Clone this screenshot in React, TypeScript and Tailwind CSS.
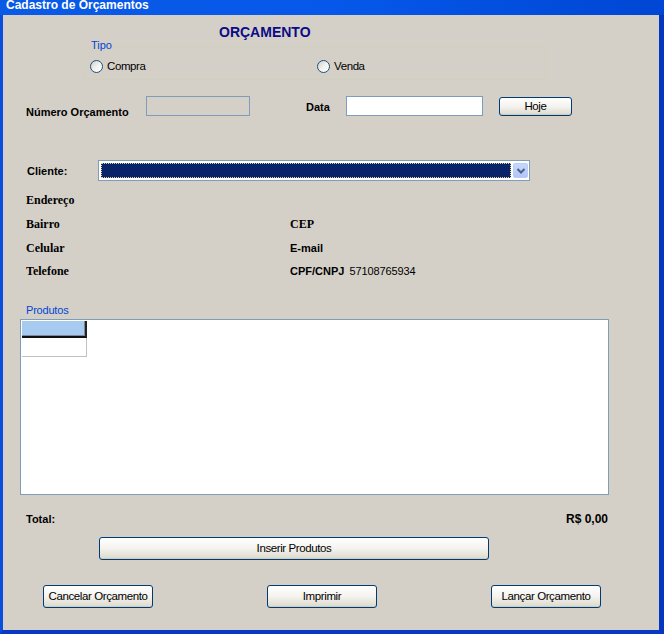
import React from 'react';

const XpButton: React.FC<{ label: string; className?: string }> = ({ label, className = '' }) => (
  <button
    className={`flex items-center justify-center rounded-[3px] border border-[#003c74] bg-linear-to-b from-white via-[#f4f3ee] to-[#dcd8cc] text-[11.5px] tracking-[-0.4px] text-black shadow-[inset_0_-1px_0_#d0cbbd] ${className}`}
  >
    {label}
  </button>
);

const Radio: React.FC<{ label: string; className?: string }> = ({ label, className = '' }) => (
  <label className={`flex items-center gap-[4px] text-[11.5px] tracking-[-0.4px] text-black ${className}`}>
    <span className="h-[13px] w-[13px] shrink-0 rounded-full border border-[#1c5180] bg-linear-to-br from-[#d2cec3] via-[#f2f1ec] to-white" />
    <span>{label}</span>
  </label>
);

const serifLabel = "font-['Liberation_Serif',serif] text-[12px] font-bold leading-[14px] text-black";
const sansLabel = 'text-[11px] font-bold leading-[13px] text-black';

export default function App() {
  return (
    <div className="flex h-[634px] w-[664px] flex-col overflow-hidden font-['Liberation_Sans',Arial,sans-serif]">
      {/* Title bar (cut off at top) */}
      <div className="h-[15px] shrink-0 overflow-hidden bg-linear-to-r from-[#0a5ae6] via-[#0758ea] to-[#0046d4] pl-[6px]">
        <div className="-mt-[1px] text-[12px] font-bold leading-[12px] text-white">Cadastro de Orçamentos</div>
      </div>

      {/* Client area */}
      <div className="flex flex-1 flex-col border-b-[4px] border-l-[3px] border-r-[5px] border-b-[#0838c4] border-l-[#0a4edc] border-r-[#0436c0] bg-[#d4d0c8]">
        <div className="mt-[9px] h-[16px] pl-[216px] text-[14px] font-bold leading-[16px] text-[#0b0b86]">ORÇAMENTO</div>

        {/* Tipo group */}
        <div className="relative ml-[80px] mt-[6px] h-[34px] w-[463px] rounded-[3px] border border-[#d0d0bf]">
          <span className="absolute left-[6px] top-[-8px] bg-[#d4d0c8] px-[1px] text-[11px] leading-[13px] text-[#0046d5]">Tipo</span>
          <div className="mt-[13px] flex h-[13px] items-center pl-[6px]">
            <Radio label="Compra" className="w-[227px]" />
            <Radio label="Venda" />
          </div>
        </div>

        {/* Número / Data */}
        <div className="mt-[16px] flex h-[21px] items-start">
          <div className={`ml-[23px] mt-[10px] w-[120px] ${sansLabel}`}>Número Orçamento</div>
          <div className="h-[20px] w-[104px] border border-[#7f9db9] bg-[#d4d0c8]" />
          <div className={`ml-[56px] mt-[5px] w-[40px] ${sansLabel}`}>Data</div>
          <div className="h-[20px] w-[137px] border border-[#7f9db9] bg-white" />
          <XpButton label="Hoje" className="ml-[16px] mt-[1px] h-[19px] w-[73px]" />
        </div>

        {/* Cliente */}
        <div className="mt-[43px] flex h-[21px] items-start">
          <div className={`ml-[24px] mt-[5px] w-[71px] ${sansLabel}`}>Cliente:</div>
          <div className="flex h-[21px] w-[432px] items-center gap-[2px] border border-[#7f9db9] bg-white p-[1px] pl-[2px]">
            <div className="h-[15px] w-[410px] border border-dotted border-[#e8d88a] bg-[#0a246a]" />
            <div className="flex h-[15px] w-[15px] items-center justify-center rounded-[2px] border border-[#b9cdf8] bg-linear-to-b from-[#c8d8fc] to-[#b0c6f6]">
              <svg width="8" height="6" viewBox="0 0 8 6">
                <path d="M0.5 1 L4 4.5 L7.5 1" fill="none" stroke="#4d6185" strokeWidth="2" />
              </svg>
            </div>
          </div>
        </div>

        {/* Client details */}
        <div className={`ml-[23px] mt-[12px] h-[14px] ${serifLabel}`}>Endereço</div>
        <div className="ml-[23px] mt-[10px] flex h-[14px]">
          <div className={`w-[264px] ${serifLabel}`}>Bairro</div>
          <div className={serifLabel}>CEP</div>
        </div>
        <div className="ml-[23px] mt-[10px] flex h-[14px]">
          <div className={`w-[264px] ${serifLabel}`}>Celular</div>
          <div className={`mt-[1px] ${sansLabel}`}>E-mail</div>
        </div>
        <div className="ml-[23px] mt-[9px] flex h-[14px]">
          <div className={`w-[264px] ${serifLabel}`}>Telefone</div>
          <div className={`mt-[1px] text-[11.5px] ${sansLabel}`}>CPF/CNPJ</div>
          <div className="ml-[5px] mt-[1px] text-[11px] leading-[13px] tracking-[-0.1px] text-black">57108765934</div>
        </div>

        {/* Produtos */}
        <div className="ml-[23px] mt-[26px] h-[13px] text-[11px] leading-[13px] tracking-[-0.2px] text-[#0046d5]">Produtos</div>
        <div className="ml-[17px] mt-[2px] h-[176px] w-[589px] border border-[#7f9db9] bg-white p-[1px]">
          <div className="h-[17px] w-[65px] border-b-2 border-r-2 border-b-[#111] border-r-[#222] bg-[#a6caf0] shadow-[inset_-1px_-1px_0_#7a8a9c]" />
          <div className="h-[19px] w-[65px] border-b border-r border-[#c0c0c0] bg-white" />
        </div>

        {/* Total */}
        <div className="ml-[23px] mt-[18px] flex h-[13px] w-[582px] items-start justify-between">
          <div className={sansLabel}>Total:</div>
          <div className="-mt-[1px] text-[12px] font-bold leading-[14px] text-black">R$ 0,00</div>
        </div>

        <XpButton label="Inserir Produtos" className="ml-[96px] mt-[11px] h-[23px] w-[390px]" />

        <div className="mt-[25px] flex h-[23px] gap-[114px] pl-[40px]">
          <XpButton label="Cancelar Orçamento" className="h-[23px] w-[110px]" />
          <XpButton label="Imprimir" className="h-[23px] w-[110px]" />
          <XpButton label="Lançar Orçamento" className="h-[23px] w-[110px]" />
        </div>
      </div>
    </div>
  );
}
